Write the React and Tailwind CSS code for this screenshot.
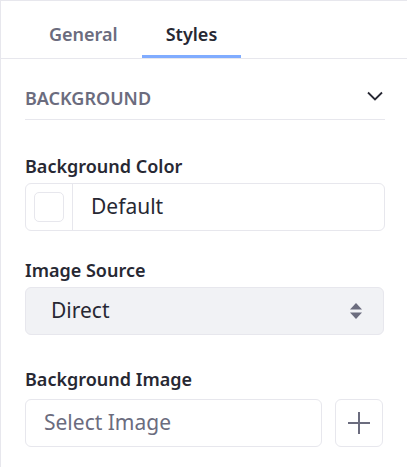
export default function App() {
  return (
    <div
      className="h-[467px] w-[407px] overflow-hidden border-l border-t border-[#e7e7ed] bg-white text-[#272833]"
      style={{ fontFamily: '"Noto Sans", "Open Sans", sans-serif' }}
    >
      <nav className="flex border-b border-[#e7e7ed] pl-[24px]">
        <button
          type="button"
          className="flex h-[57px] items-center border-b-[3px] border-transparent px-[24px] pt-[12px] text-[18px] font-semibold text-[#6b6c7e]"
        >
          General
        </button>
        <button
          type="button"
          className="flex h-[57px] items-center border-b-[3px] border-[#80acff] px-[24px] pt-[12px] text-[18px] font-semibold text-[#272833]"
        >
          Styles
        </button>
      </nav>

      <div className="w-[384px] pl-[24px]">
        <div className="mt-[27px] flex items-center justify-between border-b border-[#e7e7ed] pb-[9px] pr-[2px]">
          <span className="text-[18px] leading-[24px] font-semibold uppercase text-[#6b6c7e]">
            Background
          </span>
          <svg width="16" height="10" viewBox="0 0 16 10" className="mb-[4px]">
            <path d="M1 1.5l7 7 7-7" fill="none" stroke="#272833" strokeWidth="1.8" />
          </svg>
        </div>

        <label className="mt-[34px] mb-[5px] block text-[18px] leading-[24px] font-semibold">
          Background Color
        </label>
        <div className="flex h-[48px] w-[360px] items-center rounded-[6px] border border-[#e7e7ed]">
          <div className="flex h-full w-[47px] items-center justify-center border-r border-[#e7e7ed]">
            <div className="h-[30px] w-[30px] rounded-[5px] border border-[#e7e7ed]" />
          </div>
          <span className="pl-[18px] text-[21px] text-[#272833]">Default</span>
        </div>

        <label className="mt-[27px] mb-[5px] block text-[18px] leading-[24px] font-semibold">
          Image Source
        </label>
        <div className="flex h-[48px] w-[359px] items-center justify-between rounded-[6px] border border-[#e7e7ed] bg-[#f1f2f5] pl-[25px] pr-[21px]">
          <span className="text-[21px] text-[#272833]">Direct</span>
          <svg width="12" height="16" viewBox="0 0 12 16">
            <path d="M6 0L12 6.5H0z" fill="#6b6c7e" />
            <path d="M6 16L12 9.5H0z" fill="#6b6c7e" />
          </svg>
        </div>

        <label className="mt-[32px] mb-[8px] block text-[18px] leading-[24px] font-semibold">
          Background Image
        </label>
        <div className="flex w-[358px] gap-[13px]">
          <div className="flex h-[48px] flex-1 items-center rounded-[6px] border border-[#e7e7ed] pl-[18px]">
            <span className="text-[21px] text-[#6b6c7e]">Select Image</span>
          </div>
          <button
            type="button"
            className="flex h-[48px] w-[48px] items-center justify-center rounded-[6px] border border-[#e7e7ed]"
          >
            <svg width="22" height="22" viewBox="0 0 22 22">
              <path d="M11 0v22M0 11h22" stroke="#6b6c7e" strokeWidth="2" />
            </svg>
          </button>
        </div>
      </div>
    </div>
  );
}
